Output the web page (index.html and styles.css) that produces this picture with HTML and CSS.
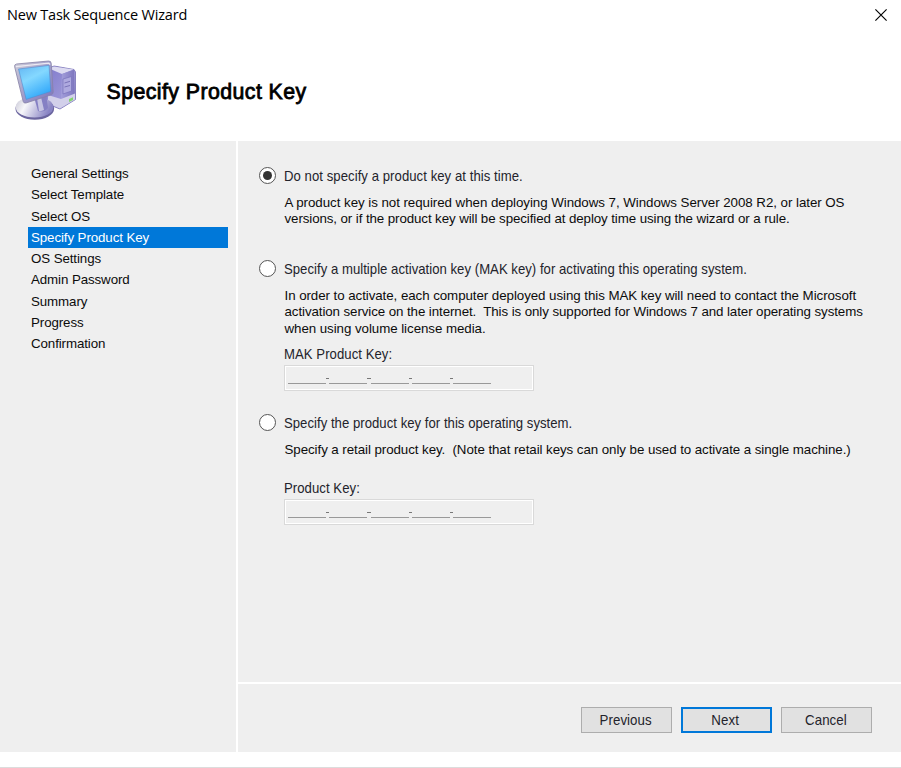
FILE: index.html
```html
<!DOCTYPE html>
<html lang="en">
<head>
<meta charset="utf-8">
<title>New Task Sequence Wizard</title>
<link rel="stylesheet" href="styles.css">
</head>
<body>
<div class="window">
  <header class="titlebar">
    <span class="caption">New Task Sequence Wizard</span>
    <svg class="close" width="12" height="12" viewBox="0 0 12 12"><path d="M.4.4 11.6 11.6M11.6.4.4 11.6" stroke="#000" stroke-width="1.15"/></svg>
  </header>
  <div class="banner">
    <svg class="logo" width="70" height="70" viewBox="0 0 70 70">
      <defs>
        <linearGradient id="screen" x1="0" y1="0" x2=".5" y2="1"><stop offset="0" stop-color="#62b4f2"/><stop offset=".45" stop-color="#84d8ff"/><stop offset="1" stop-color="#35aafa"/></linearGradient>
        <linearGradient id="frame" x1="0" y1="0" x2="1" y2="1"><stop offset="0" stop-color="#cfced9"/><stop offset="1" stop-color="#7771bd"/></linearGradient>
        <linearGradient id="side" x1="0" y1="0" x2="1" y2="1"><stop offset="0" stop-color="#7f78cc"/><stop offset="1" stop-color="#aaa6dc"/></linearGradient>
        <linearGradient id="front" x1="0" y1="0" x2="1" y2="0"><stop offset="0" stop-color="#a5a0dc"/><stop offset="1" stop-color="#7c75bd"/></linearGradient>
        <linearGradient id="base" x1="0" y1="0" x2="1" y2=".3"><stop offset="0" stop-color="#c5c4d3"/><stop offset=".35" stop-color="#f7f7fa"/><stop offset="1" stop-color="#8984c4"/></linearGradient>
      </defs>
      <path d="M40 12 47 9 67 12.5 68.5 15V42.5L53 52 38 46Z" fill="url(#side)" stroke="#7770b5" stroke-width=".8"/>
      <path d="M42 11.5 47 9.5 66.5 12.5 55 17Z" fill="#dddbf1"/>
      <path d="M55 17 67 12.8 68 42 53.5 51Z" fill="url(#front)"/>
      <path d="M41 38 54 42 68 36.5V42.5L53 51.5 41 46.5Z" fill="#d2d0ea"/>
      <path d="M56 22 64.5 19.5V34L56 37Z" fill="#aea9df" stroke="#7972bb" stroke-width=".7"/>
      <path d="M57.5 26 63 24.3M57.5 30 63 28.5" stroke="#6c64ac" stroke-width=".8"/>
      <path d="M62 42 66 40.2V43L62 45Z" fill="#83d56e"/>
      <ellipse cx="27.8" cy="51.8" rx="19.3" ry="11" fill="#6b659f"/>
      <ellipse cx="27.5" cy="50.2" rx="18.8" ry="10.4" fill="url(#base)"/>
      <path d="M27 40 39 36 41 51Q37 56 31 54Z" fill="#8580c4"/>
      <path d="M30 41 34 40 37 53Q34 54.5 32 54Z" fill="#c6c4e2"/>
      <path d="M7.6 9.6Q7.2 7.5 9.5 7L41.5 4Q44 3.9 44.2 6.2L46.2 35Q46.2 37 44.3 37.8L19 46Q16.8 46.5 16.2 44.5Z" fill="url(#frame)" stroke="#8681a6" stroke-width=".8"/>
      <path d="M9 9.6 41.7 6.2 43.2 7.5" fill="none" stroke="#ece9f0" stroke-width="1.2"/>
      <path d="M11.5 12 42 8.4 43.8 34.5 19.2 42.4Z" fill="url(#screen)" stroke="#568bcd" stroke-width=".6"/>
    </svg>
    <h1>Specify Product Key</h1>
  </div>
  <div class="content">
    <nav class="steps">
      <div class="step">General Settings</div>
      <div class="step">Select Template</div>
      <div class="step">Select OS</div>
      <div class="step current">Specify Product Key</div>
      <div class="step">OS Settings</div>
      <div class="step">Admin Password</div>
      <div class="step">Summary</div>
      <div class="step">Progress</div>
      <div class="step">Confirmation</div>
    </nav>
    <div class="main">
      <main class="page">
        <section class="option none">
          <div class="choice"><i class="radio on"></i><span class="tall">Do not specify a product key at this time.</span></div>
          <div class="note"><p class="n1">A product key is not required when deploying Windows 7, Windows Server 2008 R2, or later OS</p><p class="n2">versions, or if the product key will be specified at deploy time using the wizard or a rule.</p></div>
        </section>
        <section class="option mak">
          <div class="choice"><i class="radio"></i><span class="tall tight">Specify a multiple activation key (MAK key) for activating this operating system.</span></div>
          <div class="note"><p class="n3">In order to activate, each computer deployed using this MAK key will need to contact the Microsoft</p><p class="n4">activation service on the internet.&nbsp; This is only supported for Windows 7 and later operating systems</p><p class="n5">when using volume license media.</p></div>
          <div class="label"><span class="tall">MAK Product Key:</span></div>
          <div class="key"><b></b><i></i><b></b><i></i><b></b><i></i><b></b><i></i><b></b></div>
        </section>
        <section class="option retail">
          <div class="choice"><i class="radio"></i><span class="tall tight">Specify the product key for this operating system.</span></div>
          <div class="note"><p class="n6">Specify a retail product key.&nbsp; (Note that retail keys can only be used to activate a single machine.)</p></div>
          <div class="label"><span class="tall">Product Key:</span></div>
          <div class="key"><b></b><i></i><b></b><i></i><b></b><i></i><b></b><i></i><b></b></div>
        </section>
      </main>
      <footer class="actions">
        <button><span class="tall">Previous</span></button>
        <button class="default"><span class="tall">Next</span></button>
        <button><span class="tall">Cancel</span></button>
      </footer>
    </div>
  </div>
</div>
</body>
</html>
```
FILE: styles.css
```css
* { box-sizing: border-box; }
body { margin: 0; background: #fff; font-family: "Liberation Sans", Arial, sans-serif; font-size: 13.33px; color: #0c0c0c; }
.window { height: 768px; display: flex; flex-direction: column; border-bottom: 1px solid #dcdcdc; white-space: nowrap; overflow: hidden; }
.titlebar { height: 30px; display: flex; align-items: center; justify-content: space-between; padding: 0 14px 0 7px; }
.caption { font: 14.5px/30px "Open Sans", sans-serif; letter-spacing: -.2px; color: #000; }
.close { display: block; }
.banner { height: 111px; display: flex; align-items: center; padding: 13px 0 0 7px; }
.logo { display: block; margin-right: 29.5px; }
h1 { margin: 0; font-size: 21.3px; line-height: 26px; font-weight: 400; letter-spacing: .44px; color: #000; -webkit-text-stroke: .8px #000; }
.content { display: flex; height: 611px; gap: 2px; }
.steps { width: 236px; background: #efefef; padding: 22px 8px 0 28px; }
.step { height: 21.25px; line-height: 21.25px; padding-left: 3px; letter-spacing: -.1px; }
.current { background: #0078d9; color: #fff; }
.main { flex: 1; display: flex; flex-direction: column; gap: 2px; }
.page { height: 541px; background: #efefef; padding: 25px 0 0 21px; }
.actions { flex: 1; background: #efefef; display: flex; align-items: flex-start; gap: 9px; padding: 23px 29px 0 0; justify-content: flex-end; }
.option { display: flex; flex-direction: column; }
.none { height: 93px; }
.mak { height: 154px; }
.choice { display: flex; align-items: center; height: 20px; gap: 7.5px; }
.radio { width: 17px; height: 17px; border: 1.5px solid #555; border-radius: 50%; background: #fff; display: grid; place-items: center; position: relative; top: -.5px; }
.on::after { content: ""; width: 9px; height: 9px; border-radius: 50%; background: #333; }
.tall { font-size: 14.6px; line-height: 20px; letter-spacing: .06px; color: #23232b; display: inline-block; transform: scaleX(.9); transform-origin: left; }
.tight { letter-spacing: .03px; }
.note { margin: 9px 0 0 25.5px; }
.note p { margin: 0; line-height: 16.3px; width: max-content; }
.n1 { letter-spacing: -.05px; }
.n2 { letter-spacing: -.098px; }
.n3 { letter-spacing: -.064px; }
.n4 { letter-spacing: -.089px; }
.n5 { letter-spacing: -.06px; }
.n6 { letter-spacing: -.069px; }
.label { height: 20px; margin: 7px 0 0 25px; }
.retail .label { margin-top: 20px; }
.key { margin: 1px 0 0 25px; width: 250px; height: 26px; border: 1px solid #d9d9d9; box-shadow: inset 0 0 0 1px #fff; display: flex; align-items: flex-end; padding: 0 0 6px 3px; }
.key b { width: 38px; height: 1px; background: #999; }
.key i { width: 3.3px; height: 1px; background: #777; margin-bottom: 5px; }
button { width: 91px; height: 26px; padding: 0; border: 1px solid #adadad; background: #e1e1e1; font-family: inherit; display: grid; place-items: center; }
button .tall { transform-origin: center; transform: translateX(-1px) scaleX(.91); }
.default { border: 2px solid #0078d9; }
```
